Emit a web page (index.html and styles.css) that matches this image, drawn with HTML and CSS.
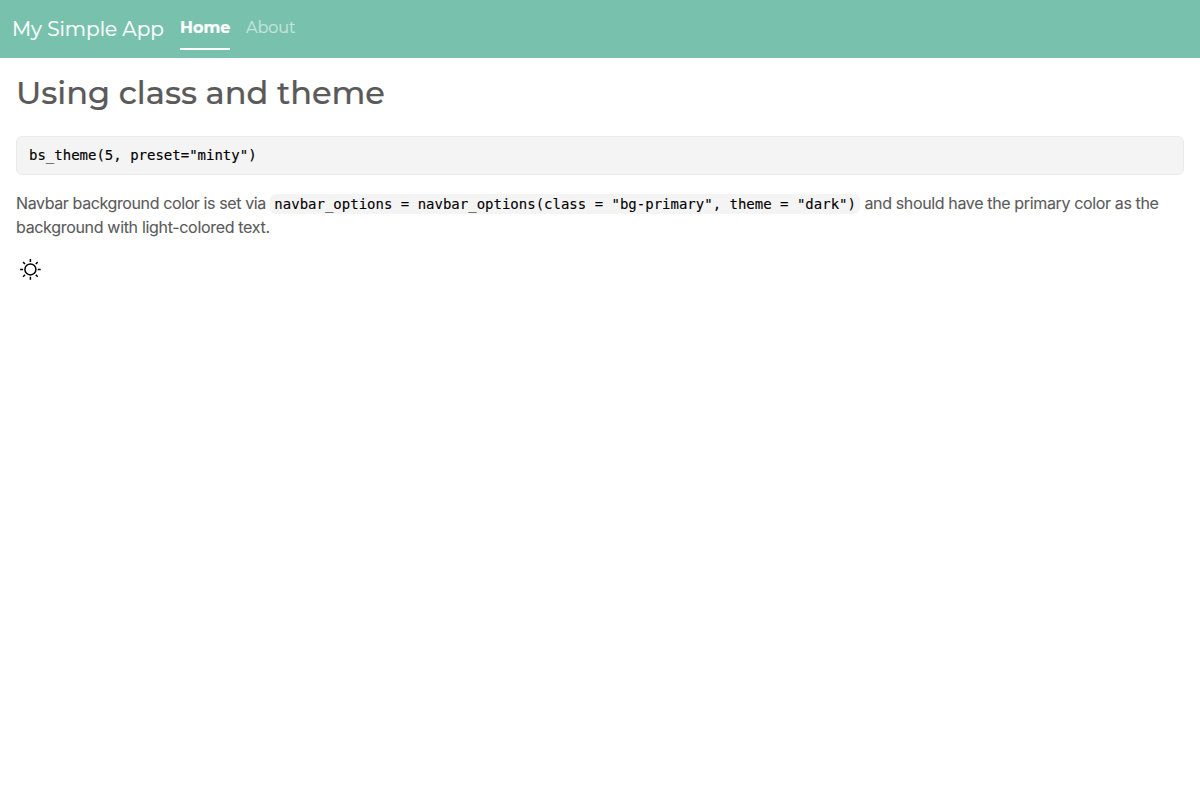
FILE: index.html
```html
<!DOCTYPE html>
<html lang="en">
<head>
<meta charset="utf-8">
<title>My Simple App</title>
<link rel="stylesheet" href="styles.css">
</head>
<body>
<nav class="navbar">
  <a class="brand">My Simple App</a>
  <ul class="nav">
    <li class="nav-item active">Home</li>
    <li class="nav-item about">About</li>
  </ul>
</nav>
<main class="content">
  <h2 class="title">Using class and theme</h2>
  <pre class="block">bs_theme(5, preset="minty")</pre>
  <p class="text"><span class="lead">Navbar background color is set via</span> <code class="code">navbar_options = navbar_options(class = "bg-primary", theme = "dark")</code> <span class="tail">and should have the primary color as the</span><br><span class="second">background with light-colored text.</span></p>
  <button class="mode" aria-label="Toggle color mode">
    <svg class="sun" viewBox="-0.4 -0.4 24 24"><circle cx="12" cy="12" r="5.5"/><path d="M12 1.7v3M12 19.3v3M1.7 12h3M19.3 12h3M4.7 4.7l1.9 1.9M17.4 17.4l1.9 1.9M4.7 19.3l1.9-1.9M17.4 6.6l1.9-1.9"/></svg>
  </button>
</main>
</body>
</html>
```
FILE: styles.css
```css
* { box-sizing: border-box; }
body { margin: 0; background: #fff; color: #5a5a5a; font: 16px/24px Inter, sans-serif; }
.navbar { height: 58px; background: #78c2ad; display: flex; padding: 0 12px; font-family: Montserrat, "Open Sans", sans-serif; color: #fff; -webkit-text-stroke: .2px; }
.brand { width: 152px; margin-right: 16px; font-size: 20px; font-weight: 400; line-height: 58px; white-space: nowrap; }
.nav { display: flex; gap: 16px; margin: 8px 0; padding: 0; list-style: none; }
.nav-item { height: 42px; line-height: 39px; white-space: nowrap; }
.active { width: 50px; font-weight: 700; border-bottom: 2px solid #fff; }
.about { color: #c4e4db; }
.content { padding: 16px; }
.title { margin: 0 0 24px; font: 500 32px/38px Montserrat, "Open Sans", sans-serif; white-space: nowrap; -webkit-text-stroke: .2px; }
.block { margin: 0 0 16px; height: 39px; padding: 8px 12px; border: 1px solid #ebebeb; border-radius: 6px; background: #f4f4f4; color: #000; font: 14px/21px "DejaVu Sans Mono", monospace; -webkit-text-stroke: .15px; }
.text { margin: 0 0 16px; white-space: nowrap; -webkit-text-stroke: .1px; }
.lead { letter-spacing: -0.39px; }
.tail { letter-spacing: -0.36px; }
.second { letter-spacing: -0.32px; }
.code { padding: 2px 4px; border-radius: 6px; background: #f4f4f4; color: #000; font: 14px/16px "DejaVu Sans Mono", monospace; }
.mode { display: block; width: 28px; height: 28px; padding: 2px; border: 0; background: none; }
.sun { display: block; width: 24px; height: 24px; fill: none; stroke: #000; stroke-width: 1.5; }
```
